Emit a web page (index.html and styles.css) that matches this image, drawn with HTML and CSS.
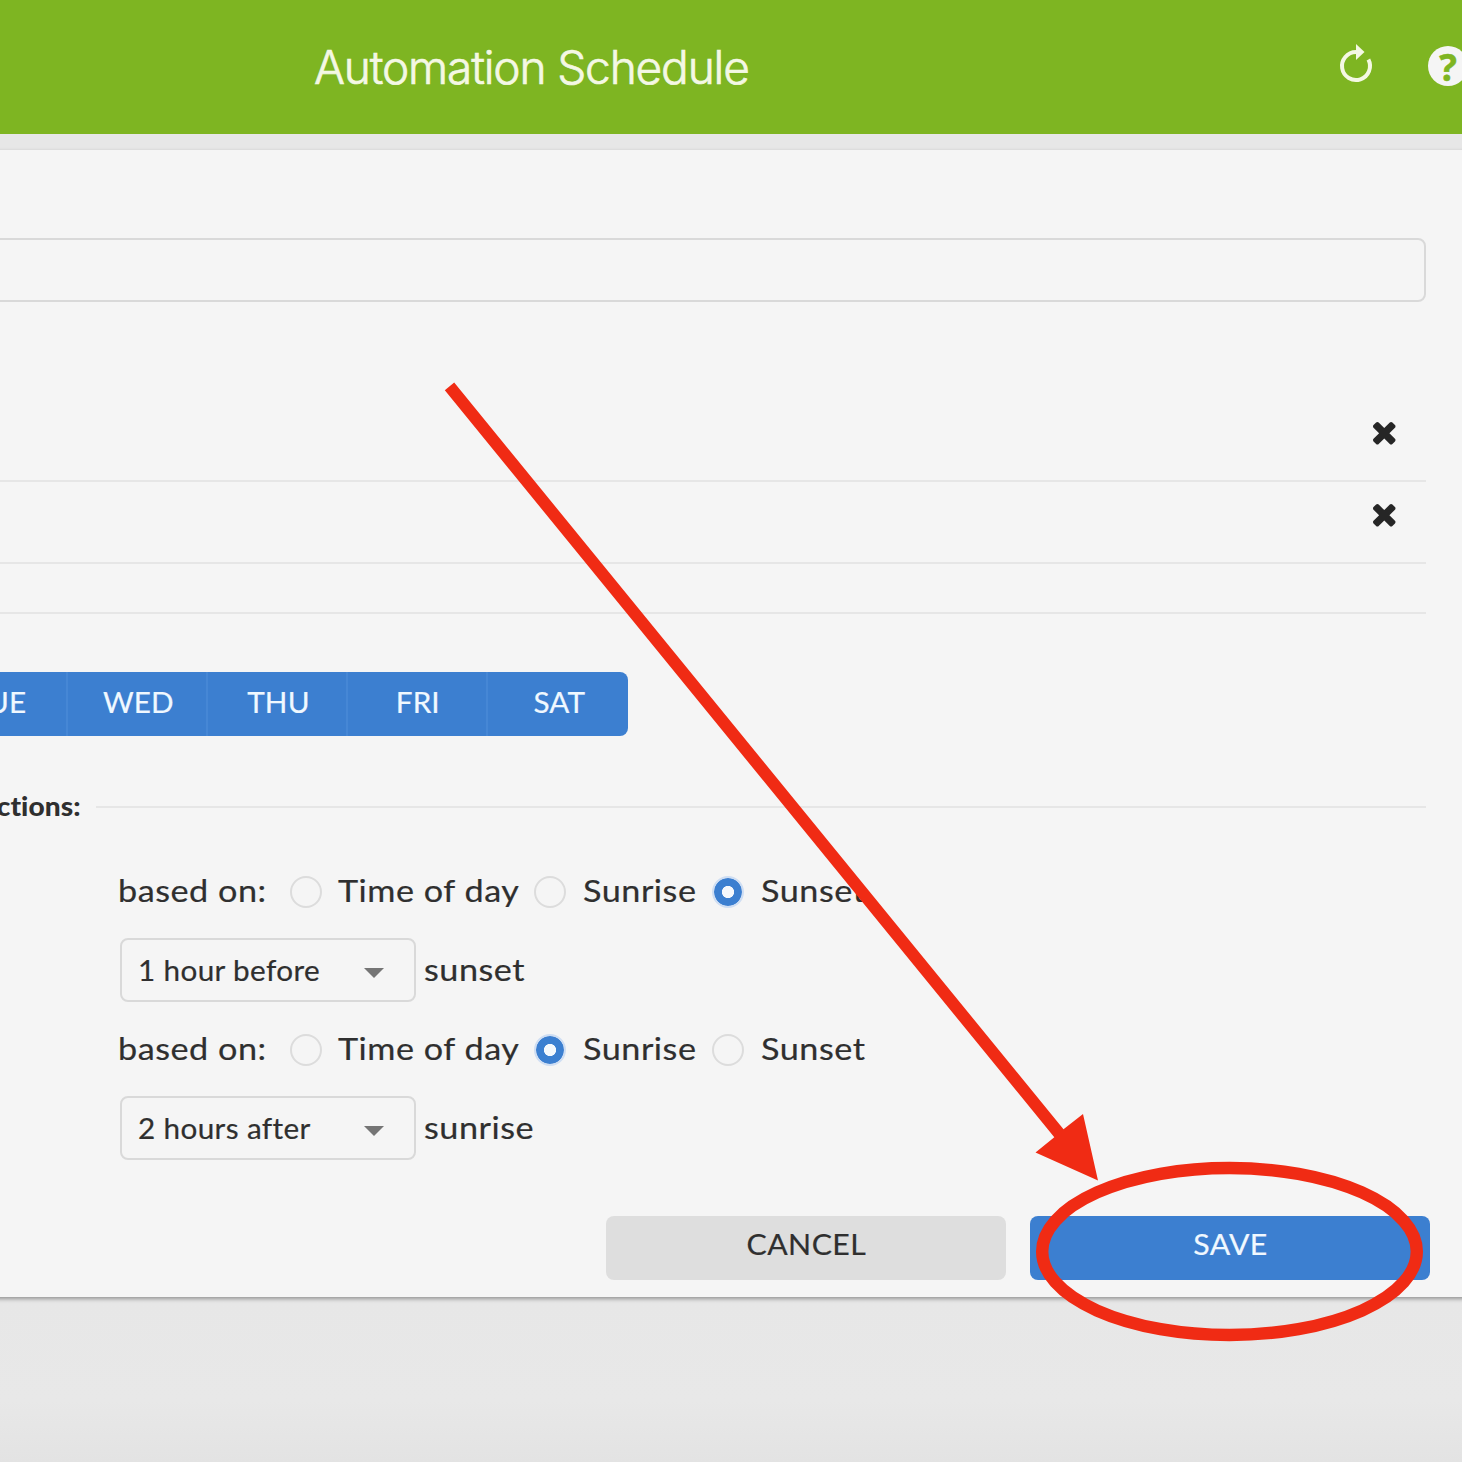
FILE: index.html
```html
<!DOCTYPE html>
<html lang="en">
<head>
<meta charset="utf-8">
<title>Automation Schedule</title>
<link rel="stylesheet" href="styles.css">
</head>
<body>
<header class="topbar">
  <h1 class="title">Automation Schedule</h1>
  <div class="tools">
    <svg class="refresh" width="36" height="42" viewBox="0 0 36 42"><path d="M18 10A14 14 0 1 0 30.4 17.5" fill="none" stroke="#f4f8e4" stroke-width="4"/><path d="M18 2l8.5 8-8.5 8z" fill="#f4f8e4"/></svg>
    <span class="help">?</span>
  </div>
</header>
<main class="panel">
  <div class="name-field"></div>
  <ul class="devices">
    <li class="device"><svg class="remove" viewBox="302 366 1188 1188"><path d="M1490 1322q0 40-28 68l-136 136q-28 28-68 28t-68-28l-294-294-294 294q-28 28-68 28t-68-28l-136-136q-28-28-28-68t28-68l294-294-294-294q-28-28-28-68t28-68l136-136q28-28 68-28t68 28l294 294 294-294q28-28 68-28t68 28l136 136q28 28 28 68t-28 68l-294 294 294 294q28 28 28 68z"/></svg></li>
    <li class="device"><svg class="remove" viewBox="302 366 1188 1188"><path d="M1490 1322q0 40-28 68l-136 136q-28 28-68 28t-68-28l-294-294-294 294q-28 28-68 28t-68-28l-136-136q-28-28-28-68t28-68l294-294-294-294q-28-28-28-68t28-68l136-136q28-28 68-28t68 28l294 294 294-294q28-28 68-28t68 28l136 136q28 28 28 68t-28 68l-294 294 294 294q28 28 28 68z"/></svg></li>
    <li class="device empty"></li>
  </ul>
  <div class="days">
    <span class="day"><span class="wide">TUE</span></span><span class="day"><span class="wide">WED</span></span><span class="day"><span class="wide">THU</span></span><span class="day"><span class="wide">FRI</span></span><span class="day"><span class="wide">SAT</span></span>
  </div>
  <div class="legend"><span class="legend-text"><span class="wide">actions:</span></span><span class="rule"></span></div>
  <div class="choice"><span class="lead"><span class="wide">based on:</span></span><i class="radio"></i><span class="opt time"><span class="wide">Time of day</span></span><i class="radio"></i><span class="opt rise"><span class="wide">Sunrise</span></span><i class="radio on"></i><span class="opt set"><span class="wide">Sunset</span></span></div>
  <div class="offset"><span class="select"><span class="wide">1 hour before</span><i class="caret"></i></span><span class="event"><span class="wide">sunset</span></span></div>
  <div class="choice"><span class="lead"><span class="wide">based on:</span></span><i class="radio"></i><span class="opt time"><span class="wide">Time of day</span></span><i class="radio on"></i><span class="opt rise"><span class="wide">Sunrise</span></span><i class="radio"></i><span class="opt set"><span class="wide">Sunset</span></span></div>
  <div class="offset"><span class="select"><span class="wide">2 hours after</span><i class="caret"></i></span><span class="event"><span class="wide">sunrise</span></span></div>
  <div class="actions"><span class="btn cancel"><span class="wide">CANCEL</span></span><span class="btn save"><span class="wide">SAVE</span></span></div>
</main>
<svg class="markup" width="1462" height="1462" viewBox="0 0 1462 1462">
  <path d="M444.8 390.3L454.2 382.6 1063.5 1129.3 1083 1114 1098 1180.5 1035.5 1152.5 1054.3 1137.3z"/>
  <ellipse cx="1229.5" cy="1251.5" rx="187.3" ry="83.5"/>
</svg>
</body>
</html>
```
FILE: styles.css
```css
* { box-sizing: border-box; }
html, body { margin: 0; height: 1462px; overflow: hidden; }
body {
  position: relative;
  background: linear-gradient(#e7e7e7 1300px, #e8e8e8 1400px, #e3e3e3 1462px);
  color: #2f2f2f;
  font-family: Lato, "Liberation Sans", sans-serif;
}
.topbar {
  display: flex;
  justify-content: space-between;
  height: 134px;
  padding-left: 314px;
  background: #7eb522;
  overflow: hidden;
}
.title {
  margin: 0;
  font: 300 46px/134px Inter, sans-serif;
  letter-spacing: -1.15px;
  color: #f4f8e4;
  -webkit-text-stroke: .7px #f4f8e4;
  white-space: nowrap;
}
.tools { display: flex; flex: none; padding-top: 42px; gap: 54px; margin-right: -6px; }
.help {
  width: 40px;
  height: 40px;
  margin-top: 4px;
  border-radius: 50%;
  background: #f5f5f5;
  color: #7eb522;
  font: 700 37px/42px "Open Sans", sans-serif;
  -webkit-text-stroke: .5px #7eb522;
  text-align: center;
}
.panel {
  height: 1147px;
  margin: 16px -10px 0;
  padding: 88px 10px 0;
  background: #f5f5f5;
  box-shadow: 0 2px 4px rgba(0, 0, 0, .36);
  overflow: hidden;
}
.name-field {
  height: 64px;
  margin: 0 36px 0 -10px;
  border: 2px solid #d9d9d9;
  border-radius: 8px;
}
.devices { list-style: none; margin: 98px 36px 0 0; padding: 0; }
.device {
  display: flex;
  justify-content: flex-end;
  align-items: flex-start;
  height: 82px;
  padding: 22px 30.5px 0 0;
  border-bottom: 2px solid #e6e6e6;
}
.device.empty { height: 50px; }
.remove { width: 22.5px; height: 22.5px; fill: #262626; }
.wide {
  display: inline-block;
  transform: scaleX(1.14);
  transform-origin: left;
  letter-spacing: .45px;
  -webkit-text-stroke: .2px currentColor;
}
.days {
  display: flex;
  width: 700px;
  height: 64px;
  margin: 58px 0 0 -72px;
  border-radius: 8px;
  background: #3c7fd0;
  overflow: hidden;
}
.day {
  flex: 0 0 140px;
  padding-left: 2px;
  border-right: 2px solid #4687d5;
  color: #f0f8ff;
  font-size: 28px;
  line-height: 60px;
  text-align: center;
}
.day .wide { transform: scaleX(1.06); transform-origin: center; letter-spacing: .1px; }
.day:last-child { border-right: 0; }
.legend { display: flex; align-items: center; height: 34px; margin: 54px 36px 0 0; }
.legend-text {
  display: flex;
  justify-content: flex-end;
  width: 81px;
  margin-right: 15px;
  padding-bottom: 4px;
  font-size: 27px;
  font-weight: 900;
  overflow: hidden;
}
.legend .wide { transform: scaleX(1.04); transform-origin: right; letter-spacing: .1px; -webkit-text-stroke: 0; }
.rule { flex: 1; height: 2px; background: #e6e6e6; }
.choice { display: flex; height: 32px; padding-left: 118px; font-size: 30px; line-height: 29px; white-space: nowrap; }
.legend + .choice { margin-top: 52px; }
.lead { width: 172px; }
.radio {
  flex: none;
  width: 32px;
  height: 32px;
  margin-right: 16px;
  border: 2px solid #dcdcdc;
  border-radius: 50%;
}
.radio.on {
  border-color: #cfdef3;
  background: radial-gradient(circle, #f5f8fc 5.7px, #3c7fd0 6.5px);
  background-clip: padding-box;
}
.opt.time { width: 196px; }
.opt.rise { width: 130px; }
.opt.rise .wide, .opt.set .wide { margin-left: 1px; }
.offset { display: flex; height: 64px; margin: 30px 0 32px; padding-left: 120px; }
.select {
  display: flex;
  justify-content: space-between;
  align-items: center;
  width: 296px;
  padding: 0 30.5px 0 16px;
  border: 2px solid #d9d9d9;
  border-radius: 8px;
  font-size: 28px;
}
.select .wide { transform: scaleX(1.06); letter-spacing: .35px; }
.caret {
  margin-top: 5px;
  border: 10px solid transparent;
  border-top-color: #757575;
  border-bottom: 0;
}
.event { margin-left: 8px; font-size: 30px; line-height: 62px; }
.actions { display: flex; justify-content: flex-end; gap: 24px; margin-top: 56px; padding-right: 32px; }
.btn {
  width: 400px;
  height: 64px;
  border-radius: 8px;
  font-size: 28px;
  line-height: 57px;
  text-align: center;
}
.btn .wide { transform: scaleX(1.08); transform-origin: center; letter-spacing: .4px; }
.cancel { background: #dedede; }
.save { background: #3c7fd0; color: #f0f8ff; }
.markup { position: absolute; left: 0; top: 0; fill: #f02b14; pointer-events: none; }
.markup ellipse { fill: none; stroke: #f02b14; stroke-width: 12.4; }
```
